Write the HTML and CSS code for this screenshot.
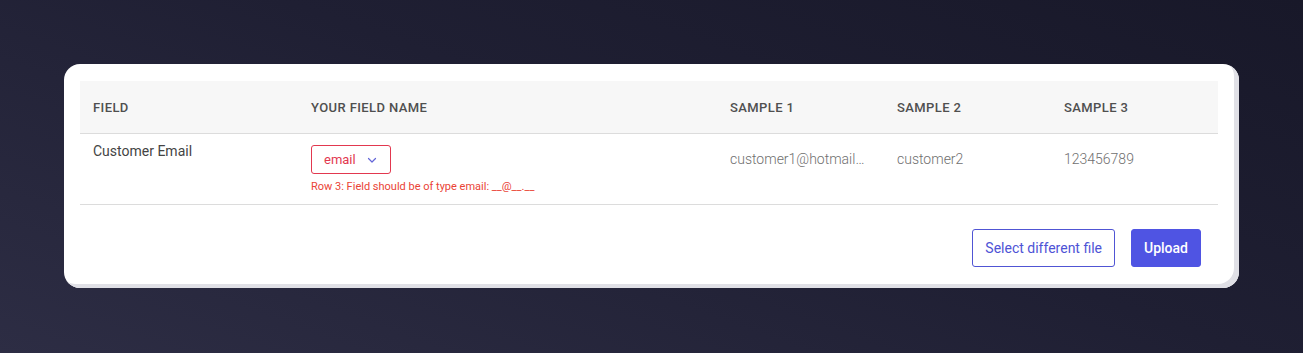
FILE: index.html
```html
<!DOCTYPE html>
<html lang="en">
<head>
    <meta charset="UTF-8">
    <meta name="viewport" content="width=device-width, initial-scale=1.0">
    <title>Map Fields</title>
    <link rel="stylesheet" href="styles.css">
</head>
<body>
    <div class="card">
        <table class="map-table">
            <colgroup>
                <col class="col-field">
                <col class="col-name">
                <col class="col-sample">
                <col class="col-sample">
                <col class="col-sample">
            </colgroup>
            <thead>
                <tr>
                    <th>Field</th>
                    <th>Your field name</th>
                    <th>Sample 1</th>
                    <th>Sample 2</th>
                    <th>Sample 3</th>
                </tr>
            </thead>
            <tbody>
                <tr>
                    <td class="field-label">Customer Email</td>
                    <td>
                        <button class="field-select">
                            <span>email</span>
                            <svg width="12" height="12" viewBox="0 0 12 12" fill="none">
                                <path d="M2.5 4.5 6 8l3.5-3.5" stroke="#6366d8" stroke-width="1.2" stroke-linecap="round" stroke-linejoin="round"/>
                            </svg>
                        </button>
                        <div class="field-error">Row 3: Field should be of type email: __@__.__</div>
                    </td>
                    <td class="sample">customer1@hotmail…</td>
                    <td class="sample">customer2</td>
                    <td class="sample">123456789</td>
                </tr>
            </tbody>
        </table>
        <div class="actions">
            <button class="btn btn-outline">Select different file</button>
            <button class="btn btn-primary">Upload</button>
        </div>
    </div>
</body>
</html>
```

FILE: styles.css
```css
body {
    margin: 0;
    height: 353px;
    font-family: 'Roboto', 'Liberation Sans', sans-serif;
    background: linear-gradient(200deg, #181829 0%, #1f1f33 45%, #2d2d44 100%);
    overflow: hidden;
}

.card {
    box-sizing: border-box;
    width: 1175px;
    height: 224px;
    margin: 64px 0 0 64px;
    padding: 17px 22px 0 16px;
    background: #ffffff;
    border-radius: 16px;
    box-shadow: inset -5px -4px 0 #e0e0e6;
}

.map-table {
    width: 1137px;
    border-collapse: collapse;
    table-layout: fixed;
}

.col-field { width: 218px; }
.col-name { width: 419px; }
.col-sample { width: 167px; }

.map-table th {
    height: 52px;
    padding: 0 13px;
    background: #f7f7f7;
    border-bottom: 1px solid #dcdcdc;
    text-align: left;
    font-size: 13px;
    font-weight: 500;
    color: #4f4f4f;
    text-transform: uppercase;
    letter-spacing: 0.4px;
}

.map-table td {
    height: 71px;
    padding: 11px 13px 0;
    border-bottom: 1px solid #dcdcdc;
    vertical-align: top;
    box-sizing: border-box;
    white-space: nowrap;
}

.field-label {
    font-size: 14px;
    color: #444444;
    line-height: 12px;
}

.map-table td.field-label {
    padding-top: 11px;
}

.field-select {
    display: flex;
    align-items: center;
    gap: 10px;
    height: 29px;
    padding: 0 12px;
    border: 1px solid #e2384f;
    border-radius: 3px;
    background: #ffffff;
    font-family: inherit;
    font-size: 13px;
    color: #e2384f;
}

.field-error {
    margin-top: 6px;
    font-size: 11px;
    color: #ea4336;
}

.sample {
    font-size: 14px;
    font-weight: 300;
    color: #6f6f6f;
    line-height: 29px;
}

.actions {
    display: flex;
    justify-content: flex-end;
    gap: 16px;
    padding: 24px 16px 0 0;
}

.btn {
    height: 38px;
    padding: 0 12px;
    border-radius: 3px;
    font-family: inherit;
    font-size: 14px;
    cursor: pointer;
}

.btn-outline {
    border: 1px solid #5055d4;
    background: #ffffff;
    color: #4e53d6;
}

.btn-primary {
    border: 1px solid #4f54e3;
    background: #4f54e3;
    color: #ffffff;
    font-weight: 500;
}
```
